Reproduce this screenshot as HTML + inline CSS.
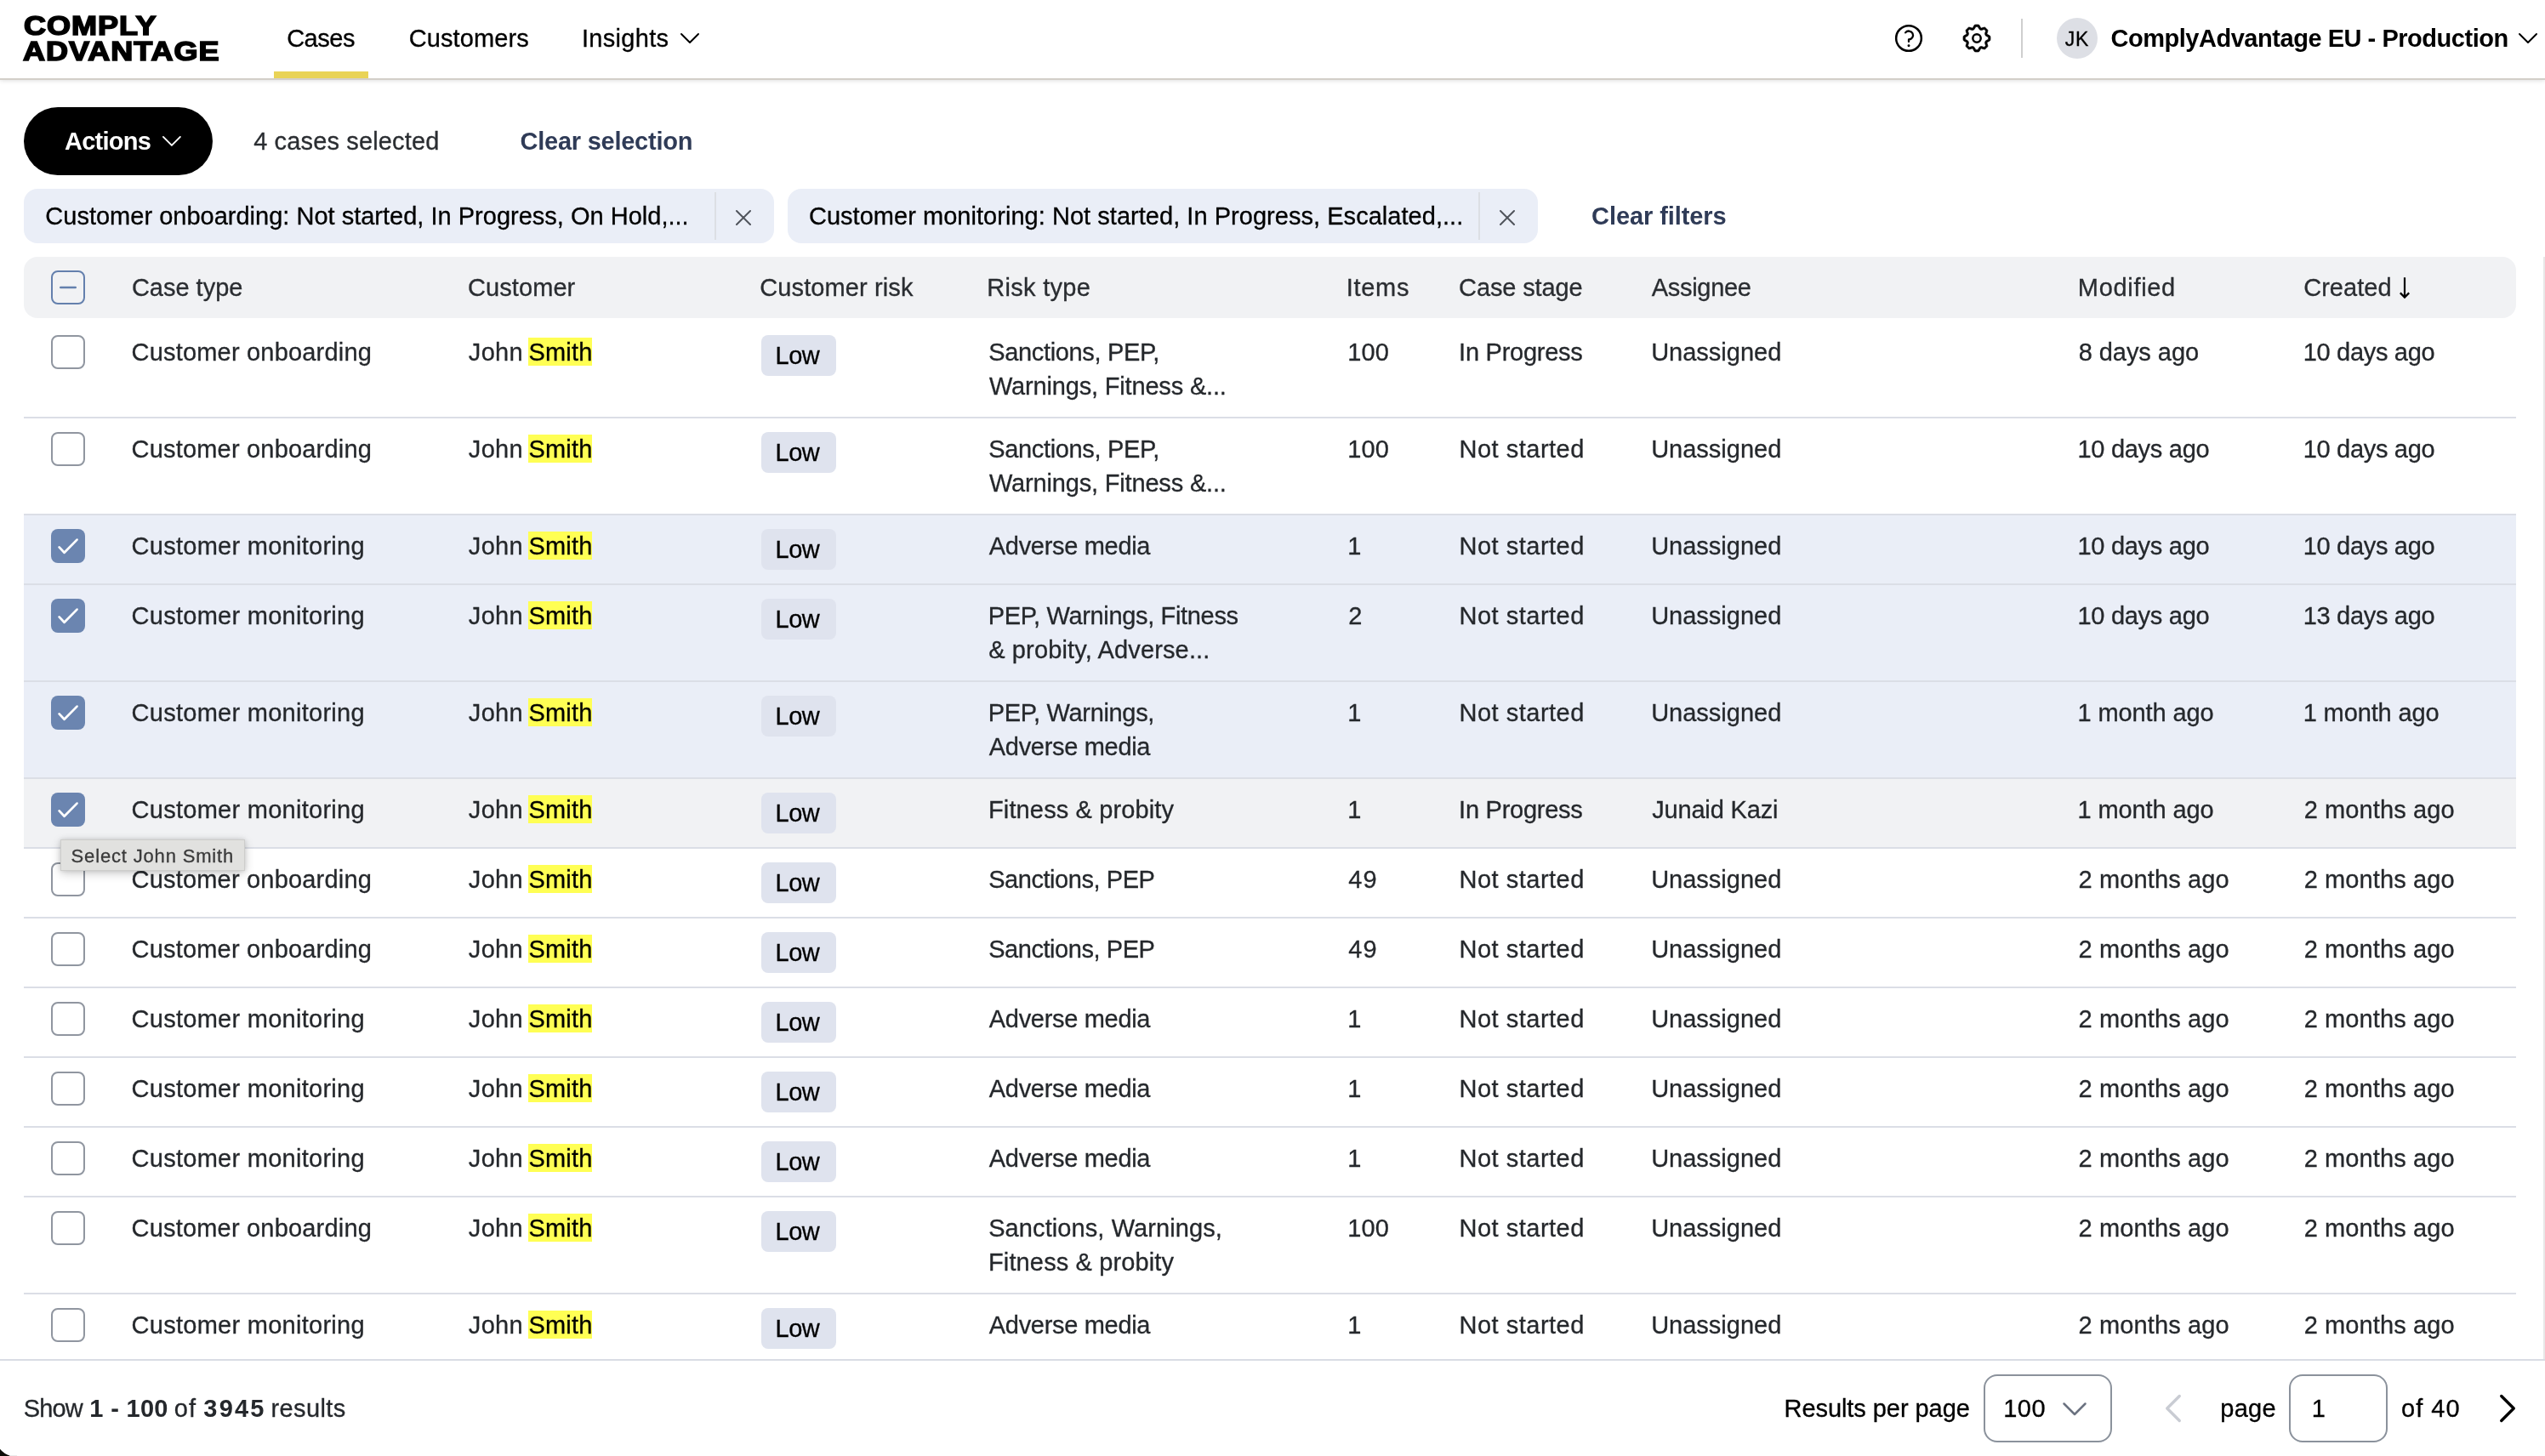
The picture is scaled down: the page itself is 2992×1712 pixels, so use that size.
<!DOCTYPE html>
<html lang="en"><head><meta charset="utf-8"><title>Cases - ComplyAdvantage</title>
<style>
*{box-sizing:border-box}
html,body{margin:0;padding:0;background:#fff}
body{width:2992px;height:1712px;overflow:hidden;font-family:"Liberation Sans",sans-serif;color:#25282c;-webkit-font-smoothing:antialiased}
#app{position:relative;width:2992px;height:1712px;overflow:hidden;background:#fff;will-change:transform}
.t{position:absolute;white-space:pre;line-height:40px;font-size:29px;-webkit-text-stroke-width:.3px}
.t.b{-webkit-text-stroke-width:0}
.ic{position:absolute;display:block;overflow:visible}
header{position:absolute;left:0;top:0;width:2992px;height:94px;background:#fff;border-bottom:2px solid #d3cfc9;box-shadow:0 1px 5px rgba(0,0,0,.13);z-index:5}
.t.logo{transform-origin:0 50%;transform:scaleX(1.163);-webkit-text-stroke:1.6px #000;letter-spacing:.8px;paint-order:stroke fill}
.navbar{position:absolute;left:322px;top:84px;width:111px;height:8px;background:#e9d356}
.vdiv{position:absolute;left:2376px;top:22px;width:2px;height:46px;background:#cfcfcf}
.avatar{position:absolute;left:2418px;top:21px;width:48px;height:48px;border-radius:50%;background:#dddfe5}
.btn{position:absolute;left:28px;top:126px;width:222px;height:80px;border-radius:40px;background:#000}
.chip{position:absolute;top:222px;height:64px;border-radius:16px;background:#eaeef7}
.chip i{position:absolute;top:4px;width:2px;height:56px;background:#dcdfe4}
.thead{position:absolute;left:28px;top:302px;width:2930px;height:72px;border-radius:16px;background:#f1f2f4}
.row{position:absolute;left:28px;width:2930px;border-bottom:2px solid #dbdee6}
.row.sel{background:#eaeef7}
.row.hov{background:#f1f2f4}
.cb{position:absolute;left:32px;width:40px;height:40px;border-radius:8px;background:#fff;border:2px solid #9096a0}
.cb.on{background:#6b85b0;border:0}
.cb.mix{border-color:#6480ad;background:#f1f2f4}
.cb svg{display:block}
.badge{position:absolute;left:867px;top:16px;width:88px;height:48px;border-radius:8px;background:#dfe3ee}
.hlbg{position:absolute;left:593px;top:19px;width:75px;height:33px;background:#ffff54}
.sbar{position:absolute;left:2990px;top:302px;width:2px;height:1296px;background:#e8e8e8}
.tip{position:absolute;left:71px;top:987px;width:217px;height:37px;background:#e1e1df;border:1px solid #cdcdcb;box-shadow:0 3px 12px rgba(0,0,0,.2),0 0 5px rgba(0,0,0,.12);z-index:4}
footer{position:absolute;left:0;top:1598px;width:2992px;height:114px;background:#fff;border-top:2px solid #d9dce4;z-index:3}
.box{position:absolute;top:1616px;height:80px;border:2px solid #8b929c;border-radius:16px;background:#fff}
.corner{position:absolute;left:0;top:1700px;z-index:9}
b{font-weight:700}
</style></head><body><div id="app">

<header>
<span class="t b logo" style="left:28.03px;top:11.30px;font-size:31px;font-weight:700;color:#000;">COMPLY</span>
<span class="t b logo" style="left:27.13px;top:41.00px;font-size:31px;font-weight:700;color:#000;">ADVANTAGE</span>
<nav>
<span class="t" style="left:337.13px;top:24.80px;font-size:29px;letter-spacing:-0.471px;color:#000;">Cases</span>
<span class="t" style="left:480.73px;top:24.80px;font-size:29px;letter-spacing:0.102px;color:#000;">Customers</span>
<span class="t" style="left:683.92px;top:24.80px;font-size:29px;letter-spacing:0.324px;color:#000;">Insights</span>
</nav>
<div class="navbar"></div>
<svg class="ic" style="left:798.00px;top:36.60px" width="26" height="18" viewBox="0 0 26 18"><polyline points="3,3 13,13 23,3" fill="none" stroke="#000" stroke-width="2" stroke-linecap="round" stroke-linejoin="round"/></svg>
<svg class="ic" style="left:2224px;top:25px" width="40" height="40" viewBox="0 0 256 256"><circle cx="128" cy="128" r="95" fill="none" stroke="#000" stroke-width="16"/><circle cx="128" cy="184" r="9.5" fill="#000"/><path d="M103,85.8A32,32,0,1,1,128,137.6V153" fill="none" stroke="#000" stroke-width="14.5" stroke-linecap="round" stroke-linejoin="round"/></svg>
<svg class="ic" style="left:2304px;top:25px" width="40" height="40" viewBox="0 0 256 256"><g transform="translate(128 128) rotate(22.5) scale(.95) translate(-128 -128)"><path fill="#000" fill-rule="evenodd" stroke="#000" stroke-width="4" stroke-linejoin="round" d="M216,130.16q.06-2.16,0-4.32l14.92-18.64a8,8,0,0,0,1.48-7.06,107.21,107.21,0,0,0-10.88-26.25,8,8,0,0,0-6-3.93l-23.72-2.64q-1.48-1.56-3-3L186,40.54a8,8,0,0,0-3.94-6,107.71,107.71,0,0,0-26.25-10.87,8,8,0,0,0-7.06,1.49L130.16,40Q128,40,125.84,40L107.2,25.11a8,8,0,0,0-7.06-1.48A107.6,107.6,0,0,0,73.89,34.51a8,8,0,0,0-3.93,6L67.32,64.27q-1.56,1.49-3,3L40.54,70a8,8,0,0,0-6,3.94,107.71,107.71,0,0,0-10.87,26.25,8,8,0,0,0,1.49,7.06L40,125.84Q40,128,40,130.16L25.11,148.8a8,8,0,0,0-1.48,7.06,107.21,107.21,0,0,0,10.88,26.25,8,8,0,0,0,6,3.93l23.72,2.64q1.49,1.56,3,3L70,215.46a8,8,0,0,0,3.94,6,107.71,107.71,0,0,0,26.25,10.87,8,8,0,0,0,7.06-1.49L125.84,216q2.16.06,4.32,0l18.64,14.92a8,8,0,0,0,7.06,1.48,107.21,107.21,0,0,0,26.25-10.88,8,8,0,0,0,3.93-6l2.64-23.72q1.56-1.48,3-3L215.46,186a8,8,0,0,0,6-3.94,107.71,107.71,0,0,0,10.87-26.25,8,8,0,0,0-1.49-7.06Zm-16.1-6.5a73.93,73.93,0,0,1,0,8.68,8,8,0,0,0,1.74,5.48l14.19,17.73a91.57,91.57,0,0,1-6.23,15L187,173.11a8,8,0,0,0-5.1,2.64,74.11,74.11,0,0,1-6.14,6.14,8,8,0,0,0-2.64,5.1l-2.51,22.58a91.32,91.32,0,0,1-15,6.23l-17.74-14.19a8,8,0,0,0-5-1.75h-.48a73.93,73.93,0,0,1-8.68,0,8,8,0,0,0-5.48,1.74L100.45,215.8a91.57,91.57,0,0,1-15-6.23L82.89,187a8,8,0,0,0-2.64-5.1,74.11,74.11,0,0,1-6.14-6.14,8,8,0,0,0-5.1-2.64L46.43,170.6a91.32,91.32,0,0,1-6.23-15l14.19-17.74a8,8,0,0,0,1.74-5.48,73.93,73.93,0,0,1,0-8.68,8,8,0,0,0-1.74-5.48L40.2,100.45a91.57,91.57,0,0,1,6.23-15L69,82.89a8,8,0,0,0,5.1-2.64,74.11,74.11,0,0,1,6.14-6.14A8,8,0,0,0,82.89,69L85.4,46.43a91.32,91.32,0,0,1,15-6.23l17.74,14.19a8,8,0,0,0,5.48,1.74,73.93,73.93,0,0,1,8.68,0,8,8,0,0,0,5.48-1.74L155.55,40.2a91.57,91.57,0,0,1,15,6.23L173.11,69a8,8,0,0,0,2.64,5.1,74.11,74.11,0,0,1,6.14,6.14,8,8,0,0,0,5.1,2.64l22.58,2.51a91.32,91.32,0,0,1,6.23,15l-14.19,17.74A8,8,0,0,0,199.87,123.66Z"/></g><circle cx="128" cy="128" r="30" fill="none" stroke="#000" stroke-width="16"/></svg>
<div class="vdiv"></div><div class="avatar"></div>
<span class="t" style="left:2427.64px;top:26.00px;font-size:23px;letter-spacing:0.974px;color:#000;">JK</span>
<span class="t b" style="left:2481.41px;top:25.40px;font-size:29px;font-weight:700;letter-spacing:-0.463px;color:#000;">ComplyAdvantage EU - Production</span>
<svg class="ic" style="left:2959.00px;top:36.60px" width="26" height="18" viewBox="0 0 26 18"><polyline points="3,3 13,13 23,3" fill="none" stroke="#000" stroke-width="2" stroke-linecap="round" stroke-linejoin="round"/></svg>
</header>
<section class="toolbar">
<div class="btn"></div>
<span class="t b" style="left:75.98px;top:145.70px;font-size:29px;font-weight:700;letter-spacing:-0.722px;color:#fff;">Actions</span>
<svg class="ic" style="left:189.10px;top:158.10px" width="25.8" height="17.8" viewBox="0 0 25.8 17.8"><polyline points="2.9,2.9 12.9,12.9 22.9,2.9" fill="none" stroke="#fff" stroke-width="1.9" stroke-linecap="round" stroke-linejoin="round"/></svg>
<span class="t" style="left:298.13px;top:145.70px;font-size:29px;letter-spacing:0.148px;color:#2a2d31;">4 cases selected</span>
<span class="t b" style="left:611.61px;top:145.70px;font-size:29px;font-weight:700;letter-spacing:-0.253px;color:#2f3b57;">Clear selection</span>
<div class="chip" style="left:28px;width:882px"><i style="left:812px"></i></div>
<span class="t" style="left:53.33px;top:234.40px;font-size:29px;letter-spacing:0.006px;color:#000;">Customer onboarding: Not started, In Progress, On Hold,...</span>
<svg class="ic" style="left:862.80px;top:245.30px" width="22" height="22" viewBox="0 0 22 22"><path d="M3 3L19 19M19 3L3 19" fill="none" stroke="#50545c" stroke-width="2" stroke-linecap="round"/></svg>
<div class="chip" style="left:926px;width:882px"><i style="left:812px"></i></div>
<span class="t" style="left:950.93px;top:234.40px;font-size:29px;letter-spacing:0.036px;color:#000;">Customer monitoring: Not started, In Progress, Escalated,...</span>
<svg class="ic" style="left:1760.60px;top:245.30px" width="22" height="22" viewBox="0 0 22 22"><path d="M3 3L19 19M19 3L3 19" fill="none" stroke="#50545c" stroke-width="2" stroke-linecap="round"/></svg>
<span class="t b" style="left:1871.11px;top:234.40px;font-size:29px;font-weight:700;letter-spacing:-0.092px;color:#2f3b57;">Clear filters</span>
</section>
<main>
<div class="thead"><span class="cb mix" style="top:16px"><svg width="36" height="36" viewBox="0 0 36 36"><line x1="9.2" y1="18" x2="26.8" y2="18" stroke="#6480ad" stroke-width="2.4" stroke-linecap="round"/></svg></span></div>
<span class="t" style="left:154.93px;top:317.90px;font-size:29px;letter-spacing:-0.015px;color:#2a2d31;">Case type</span>
<span class="t" style="left:550.08px;top:317.90px;font-size:29px;letter-spacing:0.072px;color:#2a2d31;">Customer</span>
<span class="t" style="left:893.23px;top:317.90px;font-size:29px;letter-spacing:0.114px;color:#2a2d31;">Customer risk</span>
<span class="t" style="left:1160.32px;top:317.90px;font-size:29px;letter-spacing:0.288px;color:#2a2d31;">Risk type</span>
<span class="t" style="left:1582.82px;top:317.90px;font-size:29px;letter-spacing:0.679px;color:#2a2d31;">Items</span>
<span class="t" style="left:1715.08px;top:317.90px;font-size:29px;letter-spacing:-0.132px;color:#2a2d31;">Case stage</span>
<span class="t" style="left:1941.74px;top:317.90px;font-size:29px;letter-spacing:-0.295px;color:#2a2d31;">Assignee</span>
<span class="t" style="left:2442.82px;top:317.90px;font-size:29px;letter-spacing:0.689px;color:#2a2d31;">Modified</span>
<span class="t" style="left:2708.23px;top:317.90px;font-size:29px;letter-spacing:0.028px;color:#2a2d31;">Created</span>
<svg class="ic" style="left:2817px;top:322px" width="20" height="32" viewBox="0 0 20 32"><path d="M10 4.2V27M4.8 22.4L10 27.6L15.2 22.4" fill="none" stroke="#000" stroke-width="2.2"/></svg>
<div class="row" style="top:378px;height:114px">
<span class="cb" style="top:16px"></span>
<span class="hlbg"></span><span class="badge"></span>
<span class="t" style="left:126.53px;top:16.20px;font-size:29px;letter-spacing:0.192px;color:#25282c;">Customer onboarding</span>
<span class="t" style="left:522.85px;top:16.20px;font-size:29px;letter-spacing:0.315px;color:#25282c;">John</span>
<span class="t hl" style="left:593.48px;top:16.20px;font-size:29px;letter-spacing:0.190px;color:#000;">Smith</span>
<span class="t" style="left:883.42px;top:19.70px;font-size:29px;letter-spacing:-0.398px;color:#000;">Low</span>
<span class="t" style="left:1134.18px;top:16.20px;font-size:29px;letter-spacing:-0.336px;color:#25282c;">Sanctions, PEP,</span>
<span class="t" style="left:1134.92px;top:56.20px;font-size:29px;letter-spacing:-0.169px;color:#25282c;">Warnings, Fitness &amp;...</span>
<span class="t" style="left:1556.29px;top:16.20px;font-size:29px;letter-spacing:0.126px;color:#25282c;">100</span>
<span class="t" style="left:1687.12px;top:16.20px;font-size:29px;letter-spacing:-0.267px;color:#25282c;">In Progress</span>
<span class="t" style="left:1913.16px;top:16.20px;font-size:29px;letter-spacing:-0.006px;color:#25282c;">Unassigned</span>
<span class="t" style="left:2415.64px;top:16.20px;font-size:29px;letter-spacing:-0.046px;color:#25282c;">8 days ago</span>
<span class="t" style="left:2679.69px;top:16.20px;font-size:29px;letter-spacing:-0.309px;color:#25282c;">10 days ago</span>
</div>
<div class="row" style="top:492px;height:114px">
<span class="cb" style="top:16px"></span>
<span class="hlbg"></span><span class="badge"></span>
<span class="t" style="left:126.53px;top:16.20px;font-size:29px;letter-spacing:0.192px;color:#25282c;">Customer onboarding</span>
<span class="t" style="left:522.85px;top:16.20px;font-size:29px;letter-spacing:0.315px;color:#25282c;">John</span>
<span class="t hl" style="left:593.48px;top:16.20px;font-size:29px;letter-spacing:0.190px;color:#000;">Smith</span>
<span class="t" style="left:883.42px;top:19.70px;font-size:29px;letter-spacing:-0.398px;color:#000;">Low</span>
<span class="t" style="left:1134.18px;top:16.20px;font-size:29px;letter-spacing:-0.336px;color:#25282c;">Sanctions, PEP,</span>
<span class="t" style="left:1134.92px;top:56.20px;font-size:29px;letter-spacing:-0.169px;color:#25282c;">Warnings, Fitness &amp;...</span>
<span class="t" style="left:1556.29px;top:16.20px;font-size:29px;letter-spacing:0.126px;color:#25282c;">100</span>
<span class="t" style="left:1687.52px;top:16.20px;font-size:29px;letter-spacing:0.500px;color:#25282c;">Not started</span>
<span class="t" style="left:1913.16px;top:16.20px;font-size:29px;letter-spacing:-0.006px;color:#25282c;">Unassigned</span>
<span class="t" style="left:2414.49px;top:16.20px;font-size:29px;letter-spacing:-0.289px;color:#25282c;">10 days ago</span>
<span class="t" style="left:2679.69px;top:16.20px;font-size:29px;letter-spacing:-0.309px;color:#25282c;">10 days ago</span>
</div>
<div class="row sel" style="top:606px;height:82px">
<span class="cb on" style="top:16px"><svg width="40" height="40" viewBox="0 0 40 40"><polyline points="9.6,21.4 15.6,27.8 30.5,12.6" fill="none" stroke="#fff" stroke-width="2.75" stroke-linecap="round" stroke-linejoin="round"/></svg></span>
<span class="hlbg"></span><span class="badge"></span>
<span class="t" style="left:126.53px;top:16.20px;font-size:29px;letter-spacing:0.271px;color:#25282c;">Customer monitoring</span>
<span class="t" style="left:522.85px;top:16.20px;font-size:29px;letter-spacing:0.315px;color:#25282c;">John</span>
<span class="t hl" style="left:593.48px;top:16.20px;font-size:29px;letter-spacing:0.190px;color:#000;">Smith</span>
<span class="t" style="left:883.42px;top:19.70px;font-size:29px;letter-spacing:-0.398px;color:#000;">Low</span>
<span class="t" style="left:1134.84px;top:16.20px;font-size:29px;letter-spacing:-0.315px;color:#25282c;">Adverse media</span>
<span class="t" style="left:1556.29px;top:16.20px;font-size:29px;color:#25282c;">1</span>
<span class="t" style="left:1687.52px;top:16.20px;font-size:29px;letter-spacing:0.500px;color:#25282c;">Not started</span>
<span class="t" style="left:1913.16px;top:16.20px;font-size:29px;letter-spacing:-0.006px;color:#25282c;">Unassigned</span>
<span class="t" style="left:2414.49px;top:16.20px;font-size:29px;letter-spacing:-0.289px;color:#25282c;">10 days ago</span>
<span class="t" style="left:2679.69px;top:16.20px;font-size:29px;letter-spacing:-0.309px;color:#25282c;">10 days ago</span>
</div>
<div class="row sel" style="top:688px;height:114px">
<span class="cb on" style="top:16px"><svg width="40" height="40" viewBox="0 0 40 40"><polyline points="9.6,21.4 15.6,27.8 30.5,12.6" fill="none" stroke="#fff" stroke-width="2.75" stroke-linecap="round" stroke-linejoin="round"/></svg></span>
<span class="hlbg"></span><span class="badge"></span>
<span class="t" style="left:126.53px;top:16.20px;font-size:29px;letter-spacing:0.271px;color:#25282c;">Customer monitoring</span>
<span class="t" style="left:522.85px;top:16.20px;font-size:29px;letter-spacing:0.315px;color:#25282c;">John</span>
<span class="t hl" style="left:593.48px;top:16.20px;font-size:29px;letter-spacing:0.190px;color:#000;">Smith</span>
<span class="t" style="left:883.42px;top:19.70px;font-size:29px;letter-spacing:-0.398px;color:#000;">Low</span>
<span class="t" style="left:1133.72px;top:16.20px;font-size:29px;letter-spacing:-0.337px;color:#25282c;">PEP, Warnings, Fitness</span>
<span class="t" style="left:1134.18px;top:56.20px;font-size:29px;letter-spacing:0.140px;color:#25282c;">&amp; probity, Adverse...</span>
<span class="t" style="left:1557.24px;top:16.20px;font-size:29px;color:#25282c;">2</span>
<span class="t" style="left:1687.52px;top:16.20px;font-size:29px;letter-spacing:0.500px;color:#25282c;">Not started</span>
<span class="t" style="left:1913.16px;top:16.20px;font-size:29px;letter-spacing:-0.006px;color:#25282c;">Unassigned</span>
<span class="t" style="left:2414.49px;top:16.20px;font-size:29px;letter-spacing:-0.289px;color:#25282c;">10 days ago</span>
<span class="t" style="left:2679.69px;top:16.20px;font-size:29px;letter-spacing:-0.309px;color:#25282c;">13 days ago</span>
</div>
<div class="row sel" style="top:802px;height:114px">
<span class="cb on" style="top:16px"><svg width="40" height="40" viewBox="0 0 40 40"><polyline points="9.6,21.4 15.6,27.8 30.5,12.6" fill="none" stroke="#fff" stroke-width="2.75" stroke-linecap="round" stroke-linejoin="round"/></svg></span>
<span class="hlbg"></span><span class="badge"></span>
<span class="t" style="left:126.53px;top:16.20px;font-size:29px;letter-spacing:0.271px;color:#25282c;">Customer monitoring</span>
<span class="t" style="left:522.85px;top:16.20px;font-size:29px;letter-spacing:0.315px;color:#25282c;">John</span>
<span class="t hl" style="left:593.48px;top:16.20px;font-size:29px;letter-spacing:0.190px;color:#000;">Smith</span>
<span class="t" style="left:883.42px;top:19.70px;font-size:29px;letter-spacing:-0.398px;color:#000;">Low</span>
<span class="t" style="left:1133.72px;top:16.20px;font-size:29px;letter-spacing:-0.322px;color:#25282c;">PEP, Warnings,</span>
<span class="t" style="left:1134.84px;top:56.20px;font-size:29px;letter-spacing:-0.315px;color:#25282c;">Adverse media</span>
<span class="t" style="left:1556.29px;top:16.20px;font-size:29px;color:#25282c;">1</span>
<span class="t" style="left:1687.52px;top:16.20px;font-size:29px;letter-spacing:0.500px;color:#25282c;">Not started</span>
<span class="t" style="left:1913.16px;top:16.20px;font-size:29px;letter-spacing:-0.006px;color:#25282c;">Unassigned</span>
<span class="t" style="left:2414.49px;top:16.20px;font-size:29px;letter-spacing:-0.111px;color:#25282c;">1 month ago</span>
<span class="t" style="left:2679.69px;top:16.20px;font-size:29px;letter-spacing:-0.131px;color:#25282c;">1 month ago</span>
</div>
<div class="row sel hov" style="top:916px;height:82px">
<span class="cb on" style="top:16px"><svg width="40" height="40" viewBox="0 0 40 40"><polyline points="9.6,21.4 15.6,27.8 30.5,12.6" fill="none" stroke="#fff" stroke-width="2.75" stroke-linecap="round" stroke-linejoin="round"/></svg></span>
<span class="hlbg"></span><span class="badge"></span>
<span class="t" style="left:126.53px;top:16.20px;font-size:29px;letter-spacing:0.271px;color:#25282c;">Customer monitoring</span>
<span class="t" style="left:522.85px;top:16.20px;font-size:29px;letter-spacing:0.315px;color:#25282c;">John</span>
<span class="t hl" style="left:593.48px;top:16.20px;font-size:29px;letter-spacing:0.190px;color:#000;">Smith</span>
<span class="t" style="left:883.42px;top:19.70px;font-size:29px;letter-spacing:-0.398px;color:#000;">Low</span>
<span class="t" style="left:1134.02px;top:16.20px;font-size:29px;letter-spacing:0.128px;color:#25282c;">Fitness &amp; probity</span>
<span class="t" style="left:1556.29px;top:16.20px;font-size:29px;color:#25282c;">1</span>
<span class="t" style="left:1687.12px;top:16.20px;font-size:29px;letter-spacing:-0.267px;color:#25282c;">In Progress</span>
<span class="t" style="left:1914.15px;top:16.20px;font-size:29px;letter-spacing:-0.163px;color:#25282c;">Junaid Kazi</span>
<span class="t" style="left:2414.49px;top:16.20px;font-size:29px;letter-spacing:-0.111px;color:#25282c;">1 month ago</span>
<span class="t" style="left:2680.64px;top:16.20px;font-size:29px;letter-spacing:0.113px;color:#25282c;">2 months ago</span>
</div>
<div class="row" style="top:998px;height:82px">
<span class="cb" style="top:16px"></span>
<span class="hlbg"></span><span class="badge"></span>
<span class="t" style="left:126.53px;top:16.20px;font-size:29px;letter-spacing:0.192px;color:#25282c;">Customer onboarding</span>
<span class="t" style="left:522.85px;top:16.20px;font-size:29px;letter-spacing:0.315px;color:#25282c;">John</span>
<span class="t hl" style="left:593.48px;top:16.20px;font-size:29px;letter-spacing:0.190px;color:#000;">Smith</span>
<span class="t" style="left:883.42px;top:19.70px;font-size:29px;letter-spacing:-0.398px;color:#000;">Low</span>
<span class="t" style="left:1134.18px;top:16.20px;font-size:29px;letter-spacing:-0.443px;color:#25282c;">Sanctions, PEP</span>
<span class="t" style="left:1557.23px;top:16.20px;font-size:29px;letter-spacing:1.100px;color:#25282c;">49</span>
<span class="t" style="left:1687.52px;top:16.20px;font-size:29px;letter-spacing:0.500px;color:#25282c;">Not started</span>
<span class="t" style="left:1913.16px;top:16.20px;font-size:29px;letter-spacing:-0.006px;color:#25282c;">Unassigned</span>
<span class="t" style="left:2415.44px;top:16.20px;font-size:29px;letter-spacing:0.131px;color:#25282c;">2 months ago</span>
<span class="t" style="left:2680.64px;top:16.20px;font-size:29px;letter-spacing:0.113px;color:#25282c;">2 months ago</span>
</div>
<div class="row" style="top:1080px;height:82px">
<span class="cb" style="top:16px"></span>
<span class="hlbg"></span><span class="badge"></span>
<span class="t" style="left:126.53px;top:16.20px;font-size:29px;letter-spacing:0.192px;color:#25282c;">Customer onboarding</span>
<span class="t" style="left:522.85px;top:16.20px;font-size:29px;letter-spacing:0.315px;color:#25282c;">John</span>
<span class="t hl" style="left:593.48px;top:16.20px;font-size:29px;letter-spacing:0.190px;color:#000;">Smith</span>
<span class="t" style="left:883.42px;top:19.70px;font-size:29px;letter-spacing:-0.398px;color:#000;">Low</span>
<span class="t" style="left:1134.18px;top:16.20px;font-size:29px;letter-spacing:-0.443px;color:#25282c;">Sanctions, PEP</span>
<span class="t" style="left:1557.23px;top:16.20px;font-size:29px;letter-spacing:1.100px;color:#25282c;">49</span>
<span class="t" style="left:1687.52px;top:16.20px;font-size:29px;letter-spacing:0.500px;color:#25282c;">Not started</span>
<span class="t" style="left:1913.16px;top:16.20px;font-size:29px;letter-spacing:-0.006px;color:#25282c;">Unassigned</span>
<span class="t" style="left:2415.44px;top:16.20px;font-size:29px;letter-spacing:0.131px;color:#25282c;">2 months ago</span>
<span class="t" style="left:2680.64px;top:16.20px;font-size:29px;letter-spacing:0.113px;color:#25282c;">2 months ago</span>
</div>
<div class="row" style="top:1162px;height:82px">
<span class="cb" style="top:16px"></span>
<span class="hlbg"></span><span class="badge"></span>
<span class="t" style="left:126.53px;top:16.20px;font-size:29px;letter-spacing:0.271px;color:#25282c;">Customer monitoring</span>
<span class="t" style="left:522.85px;top:16.20px;font-size:29px;letter-spacing:0.315px;color:#25282c;">John</span>
<span class="t hl" style="left:593.48px;top:16.20px;font-size:29px;letter-spacing:0.190px;color:#000;">Smith</span>
<span class="t" style="left:883.42px;top:19.70px;font-size:29px;letter-spacing:-0.398px;color:#000;">Low</span>
<span class="t" style="left:1134.84px;top:16.20px;font-size:29px;letter-spacing:-0.315px;color:#25282c;">Adverse media</span>
<span class="t" style="left:1556.29px;top:16.20px;font-size:29px;color:#25282c;">1</span>
<span class="t" style="left:1687.52px;top:16.20px;font-size:29px;letter-spacing:0.500px;color:#25282c;">Not started</span>
<span class="t" style="left:1913.16px;top:16.20px;font-size:29px;letter-spacing:-0.006px;color:#25282c;">Unassigned</span>
<span class="t" style="left:2415.44px;top:16.20px;font-size:29px;letter-spacing:0.131px;color:#25282c;">2 months ago</span>
<span class="t" style="left:2680.64px;top:16.20px;font-size:29px;letter-spacing:0.113px;color:#25282c;">2 months ago</span>
</div>
<div class="row" style="top:1244px;height:82px">
<span class="cb" style="top:16px"></span>
<span class="hlbg"></span><span class="badge"></span>
<span class="t" style="left:126.53px;top:16.20px;font-size:29px;letter-spacing:0.271px;color:#25282c;">Customer monitoring</span>
<span class="t" style="left:522.85px;top:16.20px;font-size:29px;letter-spacing:0.315px;color:#25282c;">John</span>
<span class="t hl" style="left:593.48px;top:16.20px;font-size:29px;letter-spacing:0.190px;color:#000;">Smith</span>
<span class="t" style="left:883.42px;top:19.70px;font-size:29px;letter-spacing:-0.398px;color:#000;">Low</span>
<span class="t" style="left:1134.84px;top:16.20px;font-size:29px;letter-spacing:-0.315px;color:#25282c;">Adverse media</span>
<span class="t" style="left:1556.29px;top:16.20px;font-size:29px;color:#25282c;">1</span>
<span class="t" style="left:1687.52px;top:16.20px;font-size:29px;letter-spacing:0.500px;color:#25282c;">Not started</span>
<span class="t" style="left:1913.16px;top:16.20px;font-size:29px;letter-spacing:-0.006px;color:#25282c;">Unassigned</span>
<span class="t" style="left:2415.44px;top:16.20px;font-size:29px;letter-spacing:0.131px;color:#25282c;">2 months ago</span>
<span class="t" style="left:2680.64px;top:16.20px;font-size:29px;letter-spacing:0.113px;color:#25282c;">2 months ago</span>
</div>
<div class="row" style="top:1326px;height:82px">
<span class="cb" style="top:16px"></span>
<span class="hlbg"></span><span class="badge"></span>
<span class="t" style="left:126.53px;top:16.20px;font-size:29px;letter-spacing:0.271px;color:#25282c;">Customer monitoring</span>
<span class="t" style="left:522.85px;top:16.20px;font-size:29px;letter-spacing:0.315px;color:#25282c;">John</span>
<span class="t hl" style="left:593.48px;top:16.20px;font-size:29px;letter-spacing:0.190px;color:#000;">Smith</span>
<span class="t" style="left:883.42px;top:19.70px;font-size:29px;letter-spacing:-0.398px;color:#000;">Low</span>
<span class="t" style="left:1134.84px;top:16.20px;font-size:29px;letter-spacing:-0.315px;color:#25282c;">Adverse media</span>
<span class="t" style="left:1556.29px;top:16.20px;font-size:29px;color:#25282c;">1</span>
<span class="t" style="left:1687.52px;top:16.20px;font-size:29px;letter-spacing:0.500px;color:#25282c;">Not started</span>
<span class="t" style="left:1913.16px;top:16.20px;font-size:29px;letter-spacing:-0.006px;color:#25282c;">Unassigned</span>
<span class="t" style="left:2415.44px;top:16.20px;font-size:29px;letter-spacing:0.131px;color:#25282c;">2 months ago</span>
<span class="t" style="left:2680.64px;top:16.20px;font-size:29px;letter-spacing:0.113px;color:#25282c;">2 months ago</span>
</div>
<div class="row" style="top:1408px;height:114px">
<span class="cb" style="top:16px"></span>
<span class="hlbg"></span><span class="badge"></span>
<span class="t" style="left:126.53px;top:16.20px;font-size:29px;letter-spacing:0.192px;color:#25282c;">Customer onboarding</span>
<span class="t" style="left:522.85px;top:16.20px;font-size:29px;letter-spacing:0.315px;color:#25282c;">John</span>
<span class="t hl" style="left:593.48px;top:16.20px;font-size:29px;letter-spacing:0.190px;color:#000;">Smith</span>
<span class="t" style="left:883.42px;top:19.70px;font-size:29px;letter-spacing:-0.398px;color:#000;">Low</span>
<span class="t" style="left:1134.18px;top:16.20px;font-size:29px;letter-spacing:0.094px;color:#25282c;">Sanctions, Warnings,</span>
<span class="t" style="left:1134.02px;top:56.20px;font-size:29px;letter-spacing:0.128px;color:#25282c;">Fitness &amp; probity</span>
<span class="t" style="left:1556.29px;top:16.20px;font-size:29px;letter-spacing:0.126px;color:#25282c;">100</span>
<span class="t" style="left:1687.52px;top:16.20px;font-size:29px;letter-spacing:0.500px;color:#25282c;">Not started</span>
<span class="t" style="left:1913.16px;top:16.20px;font-size:29px;letter-spacing:-0.006px;color:#25282c;">Unassigned</span>
<span class="t" style="left:2415.44px;top:16.20px;font-size:29px;letter-spacing:0.131px;color:#25282c;">2 months ago</span>
<span class="t" style="left:2680.64px;top:16.20px;font-size:29px;letter-spacing:0.113px;color:#25282c;">2 months ago</span>
</div>
<div class="row" style="top:1522px;height:82px">
<span class="cb" style="top:16px"></span>
<span class="hlbg"></span><span class="badge"></span>
<span class="t" style="left:126.53px;top:16.20px;font-size:29px;letter-spacing:0.271px;color:#25282c;">Customer monitoring</span>
<span class="t" style="left:522.85px;top:16.20px;font-size:29px;letter-spacing:0.315px;color:#25282c;">John</span>
<span class="t hl" style="left:593.48px;top:16.20px;font-size:29px;letter-spacing:0.190px;color:#000;">Smith</span>
<span class="t" style="left:883.42px;top:19.70px;font-size:29px;letter-spacing:-0.398px;color:#000;">Low</span>
<span class="t" style="left:1134.84px;top:16.20px;font-size:29px;letter-spacing:-0.315px;color:#25282c;">Adverse media</span>
<span class="t" style="left:1556.29px;top:16.20px;font-size:29px;color:#25282c;">1</span>
<span class="t" style="left:1687.52px;top:16.20px;font-size:29px;letter-spacing:0.500px;color:#25282c;">Not started</span>
<span class="t" style="left:1913.16px;top:16.20px;font-size:29px;letter-spacing:-0.006px;color:#25282c;">Unassigned</span>
<span class="t" style="left:2415.44px;top:16.20px;font-size:29px;letter-spacing:0.131px;color:#25282c;">2 months ago</span>
<span class="t" style="left:2680.64px;top:16.20px;font-size:29px;letter-spacing:0.113px;color:#25282c;">2 months ago</span>
</div>
<div class="sbar"></div>
</main>
<div class="tip"></div>
<span class="t"  style="z-index:4;left:83.60px;top:986.70px;font-size:22px;letter-spacing:0.832px;color:#3a3a3a;">Select John Smith</span>
<footer></footer>
<p style="margin:0"><span class="t" style="z-index:4;left:27.68px;top:1636.20px;font-size:29px;letter-spacing:-0.834px;color:#25282c;">Show</span> <span class="t b" style="z-index:4;left:105.37px;top:1636.20px;font-size:29px;font-weight:700;letter-spacing:0.303px;color:#25282c;">1 - 100</span> <span class="t" style="z-index:4;left:204.68px;top:1636.20px;font-size:29px;letter-spacing:1.100px;color:#25282c;">of</span> <span class="t b" style="z-index:4;left:239.33px;top:1636.20px;font-size:29px;font-weight:700;letter-spacing:2.200px;color:#25282c;">3945</span> <span class="t" style="z-index:4;left:318.57px;top:1636.20px;font-size:29px;letter-spacing:0.359px;color:#25282c;">results</span></p>
<span class="t" style="z-index:4;left:2097.52px;top:1636.20px;font-size:29px;letter-spacing:-0.059px;color:#000;">Results per page</span>
<span class="t" style="z-index:4;left:2355.19px;top:1636.20px;font-size:29px;letter-spacing:0.526px;color:#000;">100</span>
<span class="t" style="z-index:4;left:2610.33px;top:1636.20px;font-size:29px;letter-spacing:0.247px;color:#000;">page</span>
<span class="t" style="z-index:4;left:2717.69px;top:1636.20px;font-size:29px;color:#000;">1</span>
<span class="t" style="z-index:4;left:2822.98px;top:1636.20px;font-size:29px;letter-spacing:1.038px;color:#000;">of 40</span>
<div class="box" style="left:2332px;width:151px;z-index:3"></div>
<div class="box" style="left:2691px;width:116px;z-index:3"></div>
<svg class="ic" style="z-index:4;left:2422.80px;top:1646.85px" width="32.0" height="21.5" viewBox="0 0 32.0 21.5"><polyline points="3.5,3.5 16.0,16.0 28.5,3.5" fill="none" stroke="#6b7280" stroke-width="2.5" stroke-linecap="round" stroke-linejoin="round"/></svg>
<svg class="ic" style="z-index:4;left:2543.00px;top:1636.00px" width="24" height="40" viewBox="0 0 24 40"><polyline points="19.25,5.5 4.75,20 19.25,34.5" fill="none" stroke="#c9ccd3" stroke-width="3.4" stroke-linecap="round" stroke-linejoin="round"/></svg>
<svg class="ic" style="z-index:4;left:2936.20px;top:1636.00px" width="24" height="40" viewBox="0 0 24 40"><polyline points="4.75,5.5 19.25,20 4.75,34.5" fill="none" stroke="#000" stroke-width="3.4" stroke-linecap="round" stroke-linejoin="round"/></svg>
<svg class="corner" width="24" height="12" viewBox="0 0 24 12"><path d="M0 3.8Q4.5 9.6 12.5 12H0Z" fill="#0d0d07"/><path d="M11 11.6H20" stroke="#e2e2e2" stroke-width=".8"/></svg>
</div></body></html>
